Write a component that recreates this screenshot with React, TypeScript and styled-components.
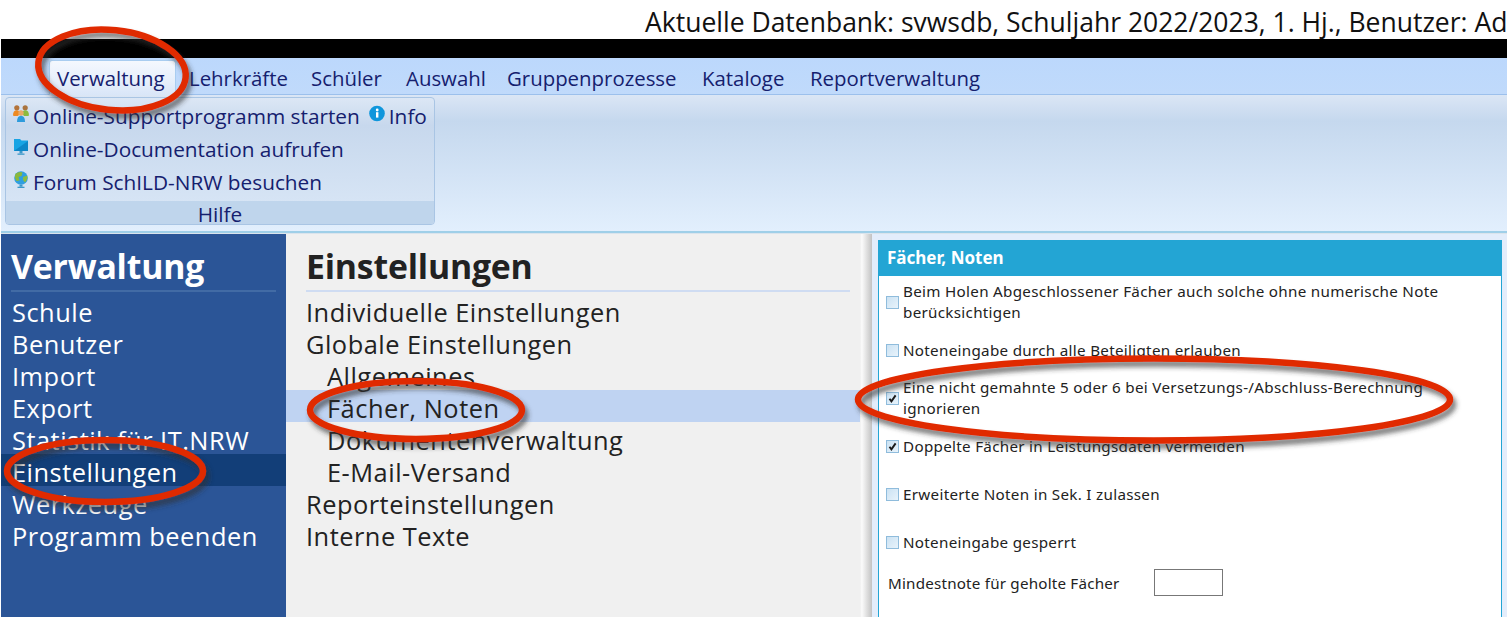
import React from "react";
import styled, { createGlobalStyle } from "styled-components";

const Global = createGlobalStyle`
  html, body { margin: 0; padding: 0; background: #fff; overflow: hidden; }
  * { box-sizing: border-box; }
`;

const Page = styled.div`
  position: relative;
  width: 1507px;
  height: 617px;
  overflow: hidden;
  padding-left: 1px;
  font-family: "Open Sans", "Noto Sans", sans-serif;
  display: flex;
  flex-direction: column;
`;

const StatusLine = styled.div`
  height: 39px;
  flex: none;
  padding: 5px 0 0 644px;
  font-size: 26.5px;
  line-height: 34px;
  white-space: nowrap;
  color: #111;
`;

const BlackBar = styled.div`
  height: 19px;
  flex: none;
  background: #000;
`;

const TabBar = styled.div`
  height: 37px;
  flex: none;
  background: linear-gradient(#bcd8fc, #c0dafb 97%, #9cc0ec 97%);
  display: flex;
  align-items: flex-end;
  padding-left: 48px;
`;

const Tab = styled.div<{ $active?: boolean; $w: number }>`
  width: ${(p) => p.$w}px;
  height: 35px;
  padding-left: 8px;
  font-size: 20.4px;
  line-height: 36px;
  color: #15206e;
  white-space: nowrap;
  ${(p) =>
    p.$active &&
    `background: linear-gradient(#f4f8fe, #e6effb 60%, #d9e6f8);
     border: 1px solid #a9cdf0; border-bottom: none; border-radius: 3px 3px 0 0;
     line-height: 34px; padding-left: 7px; margin-right: 5px;`}
`;

const Ribbon = styled.div`
  height: 139px;
  flex: none;
  background: linear-gradient(#dbe6f5, #c5d8ee 26px, #e2effd 136px, #9fcfe8 136px, #9fcfe8 138px, #dbe4ec 138px);
  padding: 2px 0 0 4px;
`;

const RibbonGroup = styled.div`
  width: 430px;
  height: 128px;
  border: 1px solid #a9c5e4;
  border-radius: 4px;
  background: linear-gradient(#dce7f5, #c7d8ed 22%, #dbe8f7);
  display: flex;
  flex-direction: column;
`;

const RibbonRows = styled.div`
  flex: 1;
  padding: 1px 0 0 7px;
`;

const RibbonRow = styled.div`
  height: 33px;
  display: flex;
  align-items: center;
  font-size: 20.8px;
  color: #15206e;
  white-space: nowrap;
`;

const IconSlot = styled.span`
  width: 16px;
  height: 18px;
  margin: 0 4px 3px 0;
  flex: none;
  display: inline-flex;
`;

const InfoSlot = styled(IconSlot)`
  margin-left: 9px;
`;

const GroupFooter = styled.div`
  height: 23px;
  flex: none;
  background: #bfd5ec;
  border-radius: 0 0 3px 3px;
  text-align: center;
  font-size: 20.8px;
  line-height: 26px;
  color: #15206e;
`;

const Main = styled.div`
  flex: 1;
  display: flex;
  min-height: 0;
`;

const NavColumn = styled.div<{ $dark?: boolean }>`
  width: ${(p) => (p.$dark ? 285 : 574)}px;
  flex: none;
  background: ${(p) => (p.$dark ? "#2b5597" : "#f0f0f0")};
  color: ${(p) => (p.$dark ? "#fff" : "#222")};
  padding-top: 10px;
`;

const NavTitle = styled.div<{ $dark?: boolean }>`
  margin: 0 10px 0 ${(p) => (p.$dark ? 10 : 20)}px;
  height: 48px;
  border-bottom: 2px solid ${(p) => (p.$dark ? "#426ba5" : "#cfdcf2")};
  font-size: 33.8px;
  font-weight: 700;
  line-height: 45px;
  letter-spacing: -0.2px;
  white-space: nowrap;
`;

const NavList = styled.div`
  margin-top: 2px;
`;

const NavRow = styled.div<{ $dark?: boolean; $sel?: boolean; $indent?: boolean }>`
  height: 32px;
  padding-top: 2px;
  font-size: 25.4px;
  letter-spacing: 0.5px;
  line-height: 32px;
  white-space: nowrap;
  padding-left: ${(p) => (p.$dark ? 11 : p.$indent ? 41 : 20)}px;
  background: ${(p) => (!p.$sel ? "transparent" : p.$dark ? "#123e78" : "#bfd3f2")};
`;

const Splitter = styled.div`
  width: 12px;
  flex: none;
  background: linear-gradient(90deg, #efefef, #fbfbfb 15%, #c2c2c2);
`;

const Detail = styled.div`
  flex: 1;
  background: #e3edfb;
  padding: 6px 5px 0 6px;
  min-width: 0;
`;

const Panel = styled.div`
  background: #fff;
  border: 1px solid #23a5d4;
  border-bottom: none;
  height: 100%;
  font-family: "Noto Sans", sans-serif;
  color: #222;
`;

const PanelHeader = styled.div`
  height: 35px;
  background: #23a5d4;
  color: #fff;
  font-size: 17px;
  font-weight: 700;
  line-height: 33px;
  padding-left: 8px;
`;

const PanelBody = styled.div`
  padding-top: 2px;
`;

const Option = styled.label`
  height: 48px;
  display: flex;
  align-items: center;
  padding-left: 7px;
  padding-right: 50px;
  font-size: 15.2px;
  line-height: 21px;
  letter-spacing: 0.3px;
`;

const Box = styled.span`
  width: 13px;
  height: 13px;
  flex: none;
  margin: 1px 4px 0 0;
  border: 1px solid #8fbcdc;
  background: linear-gradient(135deg, #cbe2f3, #e8f3fb);
  display: inline-flex;
  align-items: center;
  justify-content: center;
`;

const FieldRow = styled.div`
  height: 34px;
  display: flex;
  align-items: center;
  padding-left: 9px;
  font-size: 15.2px;
  letter-spacing: 0.2px;
`;

const FieldLabel = styled.span`
  width: 266px;
  flex: none;
`;

const FieldInput = styled.span`
  width: 69px;
  height: 27px;
  margin-top: -1px;
  border: 1px solid #777;
  background: #fff;
`;

const Marks = styled.svg`
  position: absolute;
  left: 0;
  top: 0;
  pointer-events: none;
`;

const Check = () => (
  <svg width="9" height="9" viewBox="0 0 9 9">
    <path d="M1.5 4.8 L3.4 7.4 L7.6 1.4" fill="none" stroke="#1a1a1a" strokeWidth="1.9" />
  </svg>
);

const SupportIcon = () => (
  <svg width="16" height="18" viewBox="0 0 16 18">
    <circle cx="3.8" cy="2.8" r="2.6" fill="#b3733a" />
    <circle cx="12.2" cy="2.8" r="2.6" fill="#a9743f" />
    <path d="M0 10.5 Q0 5.2 3.8 5.2 Q6.5 5.2 7 8.5 L5 11 H1 Z" fill="#ee8a22" />
    <path d="M16 10.5 Q16 5.2 12.2 5.2 Q9.5 5.2 9 8.5 L11 11 H15 Z" fill="#8cbb3f" />
    <circle cx="8" cy="8" r="2.7" fill="#e9a968" />
    <path d="M4 17 Q4 10.8 8 10.8 Q12 10.8 12 17 Z" fill="#2d9bdc" />
  </svg>
);

const DocIcon = () => (
  <svg width="16" height="18" viewBox="0 0 16 18">
    <path d="M1 1 H7 L8.5 2.5 H15 V13 H1 Z" fill="#18a4e4" />
    <path d="M1 13 L15 3 V13 Z" fill="#0d86c8" />
    <rect x="6.5" y="13" width="3" height="2.5" fill="#3c98c9" />
    <rect x="4.5" y="15.5" width="7" height="1.3" fill="#3c98c9" />
  </svg>
);

const GlobeIcon = () => (
  <svg width="16" height="18" viewBox="0 0 16 18">
    <circle cx="8" cy="7" r="6.8" fill="#2f9fe0" />
    <path d="M2.6 2.8 Q6 0 9.5 1.6 L8.5 5 L5.5 6 L6.5 9.5 L3.5 10 Q0.8 6 2.6 2.8 Z" fill="#8ab83c" />
    <path d="M10 6 L14.4 4.6 Q15 8.5 12 11.5 L10 9 Z" fill="#8cbb3f" />
    <rect x="6.5" y="13.7" width="3" height="2" fill="#3c98c9" />
    <rect x="4.5" y="15.7" width="7" height="1.3" fill="#3c98c9" />
  </svg>
);

const InfoIcon = () => (
  <svg width="16" height="18" viewBox="0 0 16 18">
    <circle cx="8" cy="8.5" r="7.8" fill="#0f96dc" />
    <rect x="7" y="7.2" width="2.4" height="5.4" fill="#fff" />
    <circle cx="8.2" cy="5" r="1.4" fill="#fff" />
  </svg>
);

const tabs: [string, number][] = [
  ["Lehrkräfte", 122],
  ["Schüler", 95],
  ["Auswahl", 101],
  ["Gruppenprozesse", 195],
  ["Kataloge", 108],
  ["Reportverwaltung", 200],
];

const leftItems = ["Schule", "Benutzer", "Import", "Export", "Statistik für IT.NRW", "Einstellungen", "Werkzeuge", "Programm beenden"];

const midItems: { t: string; indent?: boolean; sel?: boolean }[] = [
  { t: "Individuelle Einstellungen" },
  { t: "Globale Einstellungen" },
  { t: "Allgemeines", indent: true },
  { t: "Fächer, Noten", indent: true, sel: true },
  { t: "Dokumentenverwaltung", indent: true },
  { t: "E-Mail-Versand", indent: true },
  { t: "Reporteinstellungen" },
  { t: "Interne Texte" },
];

const options: { t: string; c?: boolean }[] = [
  { t: "Beim Holen Abgeschlossener Fächer auch solche ohne numerische Note berücksichtigen" },
  { t: "Noteneingabe durch alle Beteiligten erlauben" },
  { t: "Eine nicht gemahnte 5 oder 6 bei Versetzungs-/Abschluss-Berechnung ignorieren", c: true },
  { t: "Doppelte Fächer in Leistungsdaten vermeiden", c: true },
  { t: "Erweiterte Noten in Sek. I zulassen" },
  { t: "Noteneingabe gesperrt" },
];

export default function App() {
  return (
    <Page>
      <Global />
      <StatusLine>Aktuelle Datenbank: svwsdb, Schuljahr 2022/2023, 1. Hj., Benutzer: Ad</StatusLine>
      <BlackBar />
      <TabBar>
        <Tab $active $w={127}>Verwaltung</Tab>
        {tabs.map(([t, w]) => (
          <Tab key={t} $w={w}>{t}</Tab>
        ))}
      </TabBar>
      <Ribbon>
        <RibbonGroup>
          <RibbonRows>
            <RibbonRow>
              <IconSlot><SupportIcon /></IconSlot>
              Online-Supportprogramm starten
              <InfoSlot><InfoIcon /></InfoSlot>
              Info
            </RibbonRow>
            <RibbonRow>
              <IconSlot><DocIcon /></IconSlot>
              Online-Documentation aufrufen
            </RibbonRow>
            <RibbonRow>
              <IconSlot><GlobeIcon /></IconSlot>
              Forum SchILD-NRW besuchen
            </RibbonRow>
          </RibbonRows>
          <GroupFooter>Hilfe</GroupFooter>
        </RibbonGroup>
      </Ribbon>
      <Main>
        <NavColumn $dark>
          <NavTitle $dark>Verwaltung</NavTitle>
          <NavList>
            {leftItems.map((t) => (
              <NavRow key={t} $dark $sel={t === "Einstellungen"}>{t}</NavRow>
            ))}
          </NavList>
        </NavColumn>
        <NavColumn>
          <NavTitle>Einstellungen</NavTitle>
          <NavList>
            {midItems.map((i) => (
              <NavRow key={i.t} $indent={i.indent} $sel={i.sel}>{i.t}</NavRow>
            ))}
          </NavList>
        </NavColumn>
        <Splitter />
        <Detail>
          <Panel>
            <PanelHeader>Fächer, Noten</PanelHeader>
            <PanelBody>
              {options.map((o) => (
                <Option key={o.t}>
                  <Box>{o.c && <Check />}</Box>
                  <span>{o.t}</span>
                </Option>
              ))}
              <FieldRow>
                <FieldLabel>Mindestnote für geholte Fächer</FieldLabel>
                <FieldInput />
              </FieldRow>
            </PanelBody>
          </Panel>
        </Detail>
      </Main>
      <Marks width="1507" height="617" viewBox="0 0 1507 617">
        <defs>
          <filter id="markShadow" x="-10%" y="-30%" width="120%" height="170%">
            <feDropShadow dx="3" dy="5" stdDeviation="2.5" floodColor="#333" floodOpacity="0.65" />
          </filter>
        </defs>
        <g fill="none" stroke="#e02a00" strokeWidth="6.5" filter="url(#markShadow)">
          <ellipse cx="112" cy="70" rx="74" ry="40" transform="rotate(6 112 70)" />
          <ellipse cx="105" cy="471" rx="98" ry="31" />
          <ellipse cx="416" cy="410" rx="106" ry="29" />
          <ellipse cx="1154" cy="399.5" rx="296" ry="41" />
        </g>
      </Marks>
    </Page>
  );
}
